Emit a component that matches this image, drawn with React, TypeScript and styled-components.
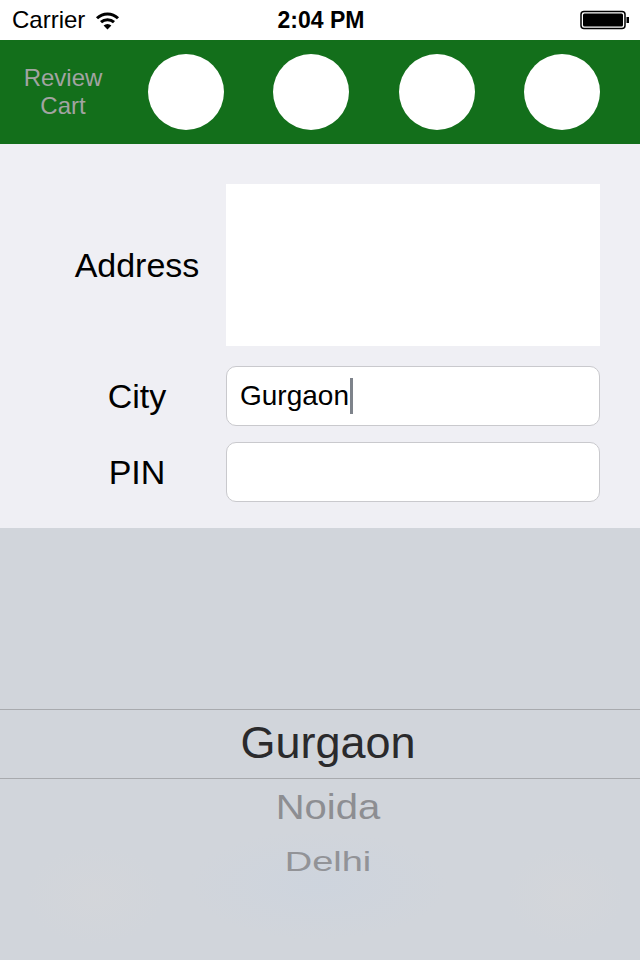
import React from "react";
import styled, { createGlobalStyle } from "styled-components";

const GlobalStyle = createGlobalStyle`
  html, body {
    margin: 0;
    padding: 0;
    background: #ffffff;
  }
  body {
    font-family: "Liberation Sans", Arial, Helvetica, sans-serif;
  }
  * { box-sizing: border-box; }
`;

const Screen = styled.div`
  width: 640px;
  height: 960px;
  display: flex;
  flex-direction: column;
  overflow: hidden;
`;

const StatusBar = styled.div`
  height: 40px;
  flex-shrink: 0;
  display: grid;
  grid-template-columns: 1fr auto 1fr;
  align-items: center;
  padding: 0 10px 0 12px;
  background: #ffffff;
  color: #000;
  font-size: 24px;
`;

const StatusLeft = styled.div`
  display: flex;
  align-items: center;
  gap: 10px;
`;

const StatusTime = styled.div`
  font-weight: bold;
  font-size: 23px;
`;

const StatusRight = styled.div`
  display: flex;
  justify-content: flex-end;
  align-items: center;
`;

const NavBar = styled.div`
  height: 104px;
  flex-shrink: 0;
  background: #136f1b;
  display: flex;
  align-items: center;
  padding-right: 40px;
`;

const NavLabel = styled.div`
  width: 126px;
  text-align: center;
  color: #a2a4a2;
  font-size: 24px;
  line-height: 28px;
`;

const CircleRow = styled.div`
  flex: 1;
  margin-left: 22px;
  display: flex;
  justify-content: space-between;
`;

const Circle = styled.div`
  width: 76px;
  height: 76px;
  border-radius: 50%;
  background: #ffffff;
`;

const Form = styled.div`
  flex-shrink: 0;
  background: #efeff4;
  padding: 40px 40px 26px 0;
  display: flex;
  flex-direction: column;
`;

const FieldRow = styled.div<{ $h: number; $top: number }>`
  height: ${(p) => p.$h}px;
  margin-top: ${(p) => p.$top}px;
  display: grid;
  grid-template-columns: 226px 1fr;
`;

const FieldLabel = styled.div`
  padding-left: 48px;
  display: flex;
  align-items: center;
  justify-content: center;
  font-size: 34px;
  color: #000;
`;

const TextArea = styled.div`
  background: #ffffff;
`;

const InputBox = styled.div`
  background: #ffffff;
  border: 1px solid #c9c9cd;
  border-radius: 10px;
  display: flex;
  align-items: center;
  padding-left: 13px;
  font-size: 28px;
  color: #000;
`;

const Caret = styled.span`
  display: inline-block;
  width: 3px;
  height: 36px;
  background: #7e838b;
  margin-left: 1px;
`;

const Picker = styled.div`
  flex: 1;
  background-color: #d1d5db;
  background-image:
    radial-gradient(ellipse 70px 50px at 95px 367px, rgba(212, 214, 218, 0.8), rgba(212, 214, 218, 0) 100%),
    radial-gradient(ellipse 130px 55px at 318px 357px, rgba(205, 212, 222, 0.8), rgba(205, 212, 222, 0) 100%),
    radial-gradient(ellipse 60px 50px at 565px 367px, rgba(212, 214, 218, 0.8), rgba(212, 214, 218, 0) 100%);
  display: flex;
  flex-direction: column;
  padding-top: 181px;
  padding-left: 16px;
`;

const SelectedRow = styled.div`
  height: 70px;
  margin-left: -16px;
  padding-left: 16px;
  border-top: 1px solid #a8aaae;
  border-bottom: 1px solid #a8aaae;
  display: flex;
  align-items: center;
  justify-content: center;
  font-size: 45px;
  color: #2a2a2c;
  padding-bottom: 2px;
`;

const PickerItem = styled.div<{ $h: number; $size: number; $squash: number; $color: string }>`
  height: ${(p) => p.$h}px;
  display: flex;
  align-items: center;
  justify-content: center;
  font-size: ${(p) => p.$size}px;
  color: ${(p) => p.$color};
  span {
    display: inline-block;
    transform: scaleY(${(p) => p.$squash});
  }
`;

const WifiIcon = () => (
  <svg width="25" height="19" viewBox="0 0 25 19">
    <path d="M2 7.2 A15 15 0 0 1 23 7.2" fill="none" stroke="#000" strokeWidth="3" />
    <path d="M6 11.2 A9.5 9.5 0 0 1 19 11.2" fill="none" stroke="#000" strokeWidth="3" />
    <path d="M8.6 14.6 L12.5 18.6 L16.4 14.6 A5.5 5.5 0 0 0 8.6 14.6 Z" fill="#000" />
  </svg>
);

const BatteryIcon = () => (
  <svg width="50" height="20" viewBox="0 0 50 20">
    <rect x="1" y="1.5" width="44" height="17" rx="3" fill="none" stroke="#000" strokeWidth="1.5" />
    <rect x="3" y="3.5" width="40" height="13" rx="1.5" fill="#000" />
    <rect x="46.5" y="7" width="2.5" height="6" fill="#000" />
  </svg>
);

export default function App() {
  return (
    <>
      <GlobalStyle />
      <Screen>
        <StatusBar>
          <StatusLeft>
            <span>Carrier</span>
            <WifiIcon />
          </StatusLeft>
          <StatusTime>2:04 PM</StatusTime>
          <StatusRight>
            <BatteryIcon />
          </StatusRight>
        </StatusBar>

        <NavBar>
          <NavLabel>
            Review
            <br />
            Cart
          </NavLabel>
          <CircleRow>
            <Circle />
            <Circle />
            <Circle />
            <Circle />
          </CircleRow>
        </NavBar>

        <Form>
          <FieldRow $h={162} $top={0}>
            <FieldLabel>Address</FieldLabel>
            <TextArea />
          </FieldRow>
          <FieldRow $h={60} $top={20}>
            <FieldLabel>City</FieldLabel>
            <InputBox>
              Gurgaon
              <Caret />
            </InputBox>
          </FieldRow>
          <FieldRow $h={60} $top={16}>
            <FieldLabel>PIN</FieldLabel>
            <InputBox />
          </FieldRow>
        </Form>

        <Picker>
          <SelectedRow>Gurgaon</SelectedRow>
          <PickerItem $h={57} $size={40} $squash={0.88} $color="#8d8e92">
            <span>Noida</span>
          </PickerItem>
          <PickerItem $h={50} $size={38} $squash={0.74} $color="#929397">
            <span>Delhi</span>
          </PickerItem>
        </Picker>
      </Screen>
    </>
  );
}
